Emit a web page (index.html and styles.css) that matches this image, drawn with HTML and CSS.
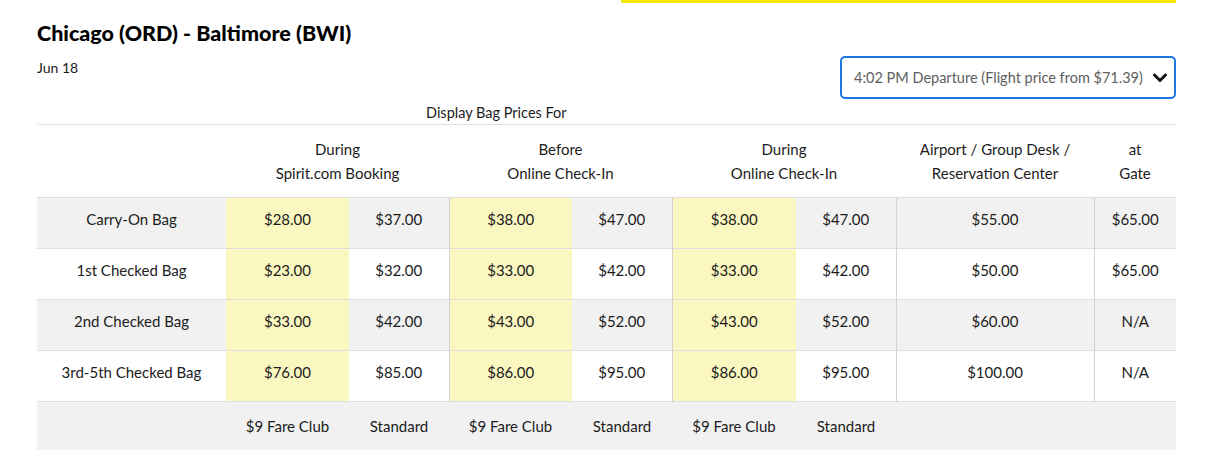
FILE: index.html
```html
<!DOCTYPE html>
<html lang="en">
<head>
<meta charset="utf-8">
<title>Bag Prices</title>
<link rel="stylesheet" href="styles.css">
</head>
<body>
<div class="page">
  <div class="topbar"><div class="accent"></div></div>
  <div class="head">
    <div class="route">
      <h1 class="title">Chicago (ORD) - Baltimore (BWI)</h1>
      <div class="date">Jun 18</div>
    </div>
    <div class="select">
      <span class="select-text">4:02 PM Departure (Flight price from $71.39)</span>
      <svg class="chev" width="14" height="10" viewBox="0 0 14 10"><path d="M1.5 2 L7 7.5 L12.5 2" fill="none" stroke="#111" stroke-width="3" stroke-linecap="round" stroke-linejoin="round"/></svg>
    </div>
  </div>
  <div class="caption">Display Bag Prices For</div>
  <table class="prices">
    <colgroup>
      <col class="c-label"><col class="c-fc"><col class="c-std"><col class="c-fc"><col class="c-std"><col class="c-fc3"><col class="c-std"><col class="c-air"><col class="c-gate">
    </colgroup>
    <thead>
      <tr>
        <th></th>
        <th colspan="2">During<br>Spirit.com Booking</th>
        <th colspan="2">Before<br>Online Check-In</th>
        <th colspan="2">During<br>Online Check-In</th>
        <th>Airport / Group Desk /<br>Reservation Center</th>
        <th>at<br>Gate</th>
      </tr>
    </thead>
    <tbody>
      <tr class="shade">
        <td>Carry-On Bag</td>
        <td class="fc">$28.00</td><td>$37.00</td>
        <td class="fc sep">$38.00</td><td>$47.00</td>
        <td class="fc sep">$38.00</td><td>$47.00</td>
        <td class="sep">$55.00</td><td class="sep">$65.00</td>
      </tr>
      <tr>
        <td>1st Checked Bag</td>
        <td class="fc">$23.00</td><td>$32.00</td>
        <td class="fc sep">$33.00</td><td>$42.00</td>
        <td class="fc sep">$33.00</td><td>$42.00</td>
        <td class="sep">$50.00</td><td class="sep">$65.00</td>
      </tr>
      <tr class="shade">
        <td>2nd Checked Bag</td>
        <td class="fc">$33.00</td><td>$42.00</td>
        <td class="fc sep">$43.00</td><td>$52.00</td>
        <td class="fc sep">$43.00</td><td>$52.00</td>
        <td class="sep">$60.00</td><td class="sep">N/A</td>
      </tr>
      <tr>
        <td>3rd-5th Checked Bag</td>
        <td class="fc">$76.00</td><td>$85.00</td>
        <td class="fc sep">$86.00</td><td>$95.00</td>
        <td class="fc sep">$86.00</td><td>$95.00</td>
        <td class="sep">$100.00</td><td class="sep">N/A</td>
      </tr>
    </tbody>
    <tfoot>
      <tr>
        <td></td>
        <td>$9 Fare Club</td><td>Standard</td>
        <td>$9 Fare Club</td><td>Standard</td>
        <td>$9 Fare Club</td><td>Standard</td>
        <td></td><td></td>
      </tr>
    </tfoot>
  </table>
</div>
</body>
</html>
```
FILE: styles.css
```css
* { box-sizing: border-box; }
html, body { margin: 0; padding: 0; background: #fff; }
body {
  font-family: "Lato", "Liberation Sans", sans-serif;
  color: #1c1c1c;
  font-size: 15px;
}
.page {
  width: 1139px;
  margin-left: 37px;
}
.topbar {
  display: flex;
  justify-content: flex-end;
}
.accent {
  width: 555px;
  height: 3px;
  background: #f5e800;
}
.head {
  display: flex;
  justify-content: space-between;
  align-items: flex-start;
}
.title {
  margin: 16px 0 0;
  font-size: 21.5px;
  line-height: 28px;
  font-weight: 900;
  color: #000;
}
.date {
  margin-top: 11px;
  font-size: 14px;
  line-height: 20px;
}
.select {
  margin-top: 53px;
  width: 336px;
  height: 43px;
  border: 2px solid #1a78e0;
  border-radius: 5px;
  display: flex;
  align-items: center;
  justify-content: space-between;
  padding: 0 7px 0 12px;
}
.select-text {
  color: #5e5e5e;
  font-size: 14.5px;
}
.chev { display: block; }
.caption {
  padding-left: 389px;
  margin-top: 4px;
  height: 22px;
  line-height: 20px;
  font-size: 14.5px;
  border-bottom: 1px solid #e2e2e6;
}
.prices {
  width: 1139px;
  border-collapse: collapse;
  table-layout: fixed;
}
.c-label { width: 189px; }
.c-fc { width: 123px; }
.c-fc3 { width: 124px; }
.c-std { width: 100px; }
.c-air { width: 198px; }
.c-gate { width: 82px; }
.prices th {
  font-weight: 400;
  line-height: 24px;
  padding: 12px 0 12px;
  height: 72px;
  text-align: center;
  vertical-align: middle;
  font-size: 15px;
}
.prices td {
  text-align: center;
  vertical-align: middle;
  padding: 0 0 8px;
  height: 51px;
  font-size: 15px;
  border-top: 1px solid #dddde2;
}
.prices tbody tr.shade td { background: #f1f1f1; }
.prices tbody td.fc, .prices tbody tr.shade td.fc { background: #fbf7c0; }
.prices tbody td.sep { border-left: 1px solid #d2d2d2; }
.prices tfoot td {
  background: #f1f1f1;
  height: 48px;
  padding: 0;
}
```
